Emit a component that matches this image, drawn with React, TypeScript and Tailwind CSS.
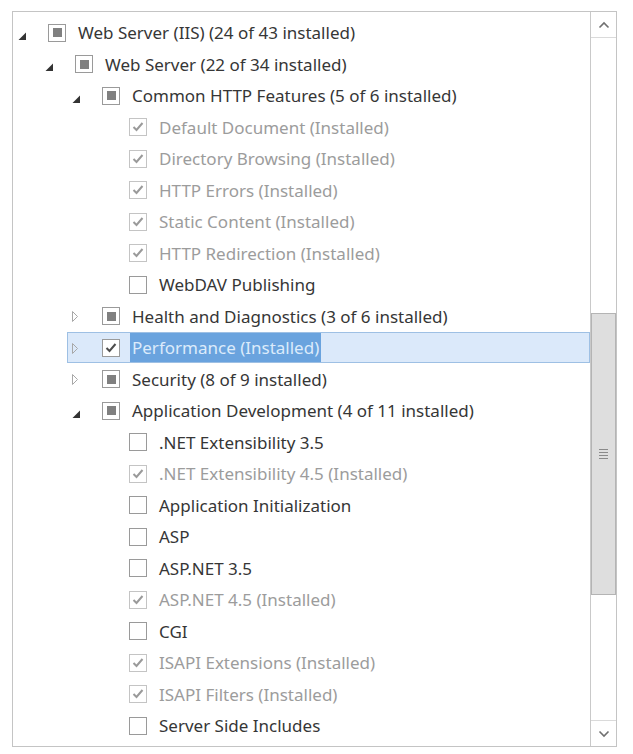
type State = "checked" | "partial" | "empty";

type Node = {
  label: string;
  level: number;
  state: State;
  arrow?: "open" | "closed";
  installed?: boolean;
  selected?: boolean;
};

const rows: Node[] = [
  { label: "Web Server (IIS) (24 of 43 installed)", level: 0, state: "partial", arrow: "open" },
  { label: "Web Server (22 of 34 installed)", level: 1, state: "partial", arrow: "open" },
  { label: "Common HTTP Features (5 of 6 installed)", level: 2, state: "partial", arrow: "open" },
  { label: "Default Document (Installed)", level: 3, state: "checked", installed: true },
  { label: "Directory Browsing (Installed)", level: 3, state: "checked", installed: true },
  { label: "HTTP Errors (Installed)", level: 3, state: "checked", installed: true },
  { label: "Static Content (Installed)", level: 3, state: "checked", installed: true },
  { label: "HTTP Redirection (Installed)", level: 3, state: "checked", installed: true },
  { label: "WebDAV Publishing", level: 3, state: "empty" },
  { label: "Health and Diagnostics (3 of 6 installed)", level: 2, state: "partial", arrow: "closed" },
  { label: "Performance (Installed)", level: 2, state: "checked", arrow: "closed", selected: true },
  { label: "Security (8 of 9 installed)", level: 2, state: "partial", arrow: "closed" },
  { label: "Application Development (4 of 11 installed)", level: 2, state: "partial", arrow: "open" },
  { label: ".NET Extensibility 3.5", level: 3, state: "empty" },
  { label: ".NET Extensibility 4.5 (Installed)", level: 3, state: "checked", installed: true },
  { label: "Application Initialization", level: 3, state: "empty" },
  { label: "ASP", level: 3, state: "empty" },
  { label: "ASP.NET 3.5", level: 3, state: "empty" },
  { label: "ASP.NET 4.5 (Installed)", level: 3, state: "checked", installed: true },
  { label: "CGI", level: 3, state: "empty" },
  { label: "ISAPI Extensions (Installed)", level: 3, state: "checked", installed: true },
  { label: "ISAPI Filters (Installed)", level: 3, state: "checked", installed: true },
  { label: "Server Side Includes", level: 3, state: "empty" },
];

const indents = ["pl-[0px]", "pl-[27px]", "pl-[54px]", "pl-[81px]"];

function Arrow({ kind }: { kind?: "open" | "closed" }) {
  if (!kind) return <span className="w-[18px] shrink-0" />;
  if (kind === "open") {
    return (
      <svg width="18" height="18" viewBox="0 0 18 18" className="shrink-0">
        <path d="M12 8.5 L12 16 L4.5 16 Z" fill="#333333" />
      </svg>
    );
  }
  return (
    <svg width="18" height="18" viewBox="0 0 18 18" className="shrink-0">
      <path d="M4.5 4.5 L9.5 9.5 L4.5 14.5 Z" fill="none" stroke="#a8a8a8" strokeWidth="1" />
    </svg>
  );
}

function Box({ state, installed, selected }: { state: State; installed?: boolean; selected?: boolean }) {
  const border = installed ? "border-[#c4c4c4]" : "border-[#9a9a9a]";
  return (
    <span className={`flex h-[18px] w-[18px] shrink-0 items-center justify-center border bg-white ${border}`}>
      {state === "partial" && <span className="h-[9px] w-[9px] bg-[#808080]" />}
      {state === "checked" && (
        <svg width="16" height="16" viewBox="0 0 16 16">
          <path
            d="M3.5 8 L6.5 11 L12.5 4"
            fill="none"
            stroke={selected ? "#4d4d4d" : "#9a9a9a"}
            strokeWidth="2"
          />
        </svg>
      )}
    </span>
  );
}

function Row({ node }: { node: Node }) {
  const text = node.installed ? "text-[#9c9c9c]" : "text-[#363636]";
  return (
    <div className={`flex h-[31.5px] items-center ${indents[node.level]}`}>
      <div
        className={`flex h-[31px] flex-1 items-center ${
          node.selected ? "border border-[#9ec0e4] bg-[#dbe9fa]" : "border border-transparent"
        }`}
      >
        <Arrow kind={node.arrow} />
        <span className="ml-[16px]">
          <Box state={node.state} installed={node.installed} selected={node.selected} />
        </span>
        {node.selected ? (
          <span className="ml-[10px] flex h-[29px] items-center whitespace-nowrap bg-[#6aa3de] px-[2px] text-[#dcebfb]">
            {node.label}
          </span>
        ) : (
          <span className={`ml-[12px] whitespace-nowrap ${text}`}>{node.label}</span>
        )}
      </div>
    </div>
  );
}

function ScrollBar() {
  return (
    <div className="flex w-[26px] shrink-0 flex-col border-l border-[#c9c9c9] bg-white">
      <div className="flex h-[26px] items-center justify-center border-b border-[#dadada]">
        <svg width="12" height="8" viewBox="0 0 12 8">
          <path d="M1.5 6.5 L6 2 L10.5 6.5" fill="none" stroke="#707070" strokeWidth="1.6" />
        </svg>
      </div>
      <div className="flex flex-1 flex-col pt-[275px] pb-[125px]">
        <div className="flex flex-1 items-center justify-center border border-[#b4b4b4] bg-[#dedede]">
          <div className="flex flex-col gap-[2px]">
            <span className="h-[1px] w-[9px] bg-[#8a8a8a]" />
            <span className="h-[1px] w-[9px] bg-[#8a8a8a]" />
            <span className="h-[1px] w-[9px] bg-[#8a8a8a]" />
            <span className="h-[1px] w-[9px] bg-[#8a8a8a]" />
          </div>
        </div>
      </div>
      <div className="flex h-[26px] items-center justify-center border-t border-[#dadada]">
        <svg width="12" height="8" viewBox="0 0 12 8">
          <path d="M1.5 1.5 L6 6 L10.5 1.5" fill="none" stroke="#707070" strokeWidth="1.6" />
        </svg>
      </div>
    </div>
  );
}

export default function App() {
  return (
    <div
      className="h-[754px] w-[633px] bg-white pl-[12px] pt-[11px]"
      style={{ fontFamily: '"Noto Sans", "Open Sans", sans-serif' }}
    >
      <div className="flex h-[736px] w-[605px] border border-[#c4c4c4] bg-white">
        <div className="flex-1 overflow-hidden pt-[5px] text-[17px] leading-none">
          {rows.map((r) => (
            <Row key={r.label} node={r} />
          ))}
        </div>
        <ScrollBar />
      </div>
    </div>
  );
}
